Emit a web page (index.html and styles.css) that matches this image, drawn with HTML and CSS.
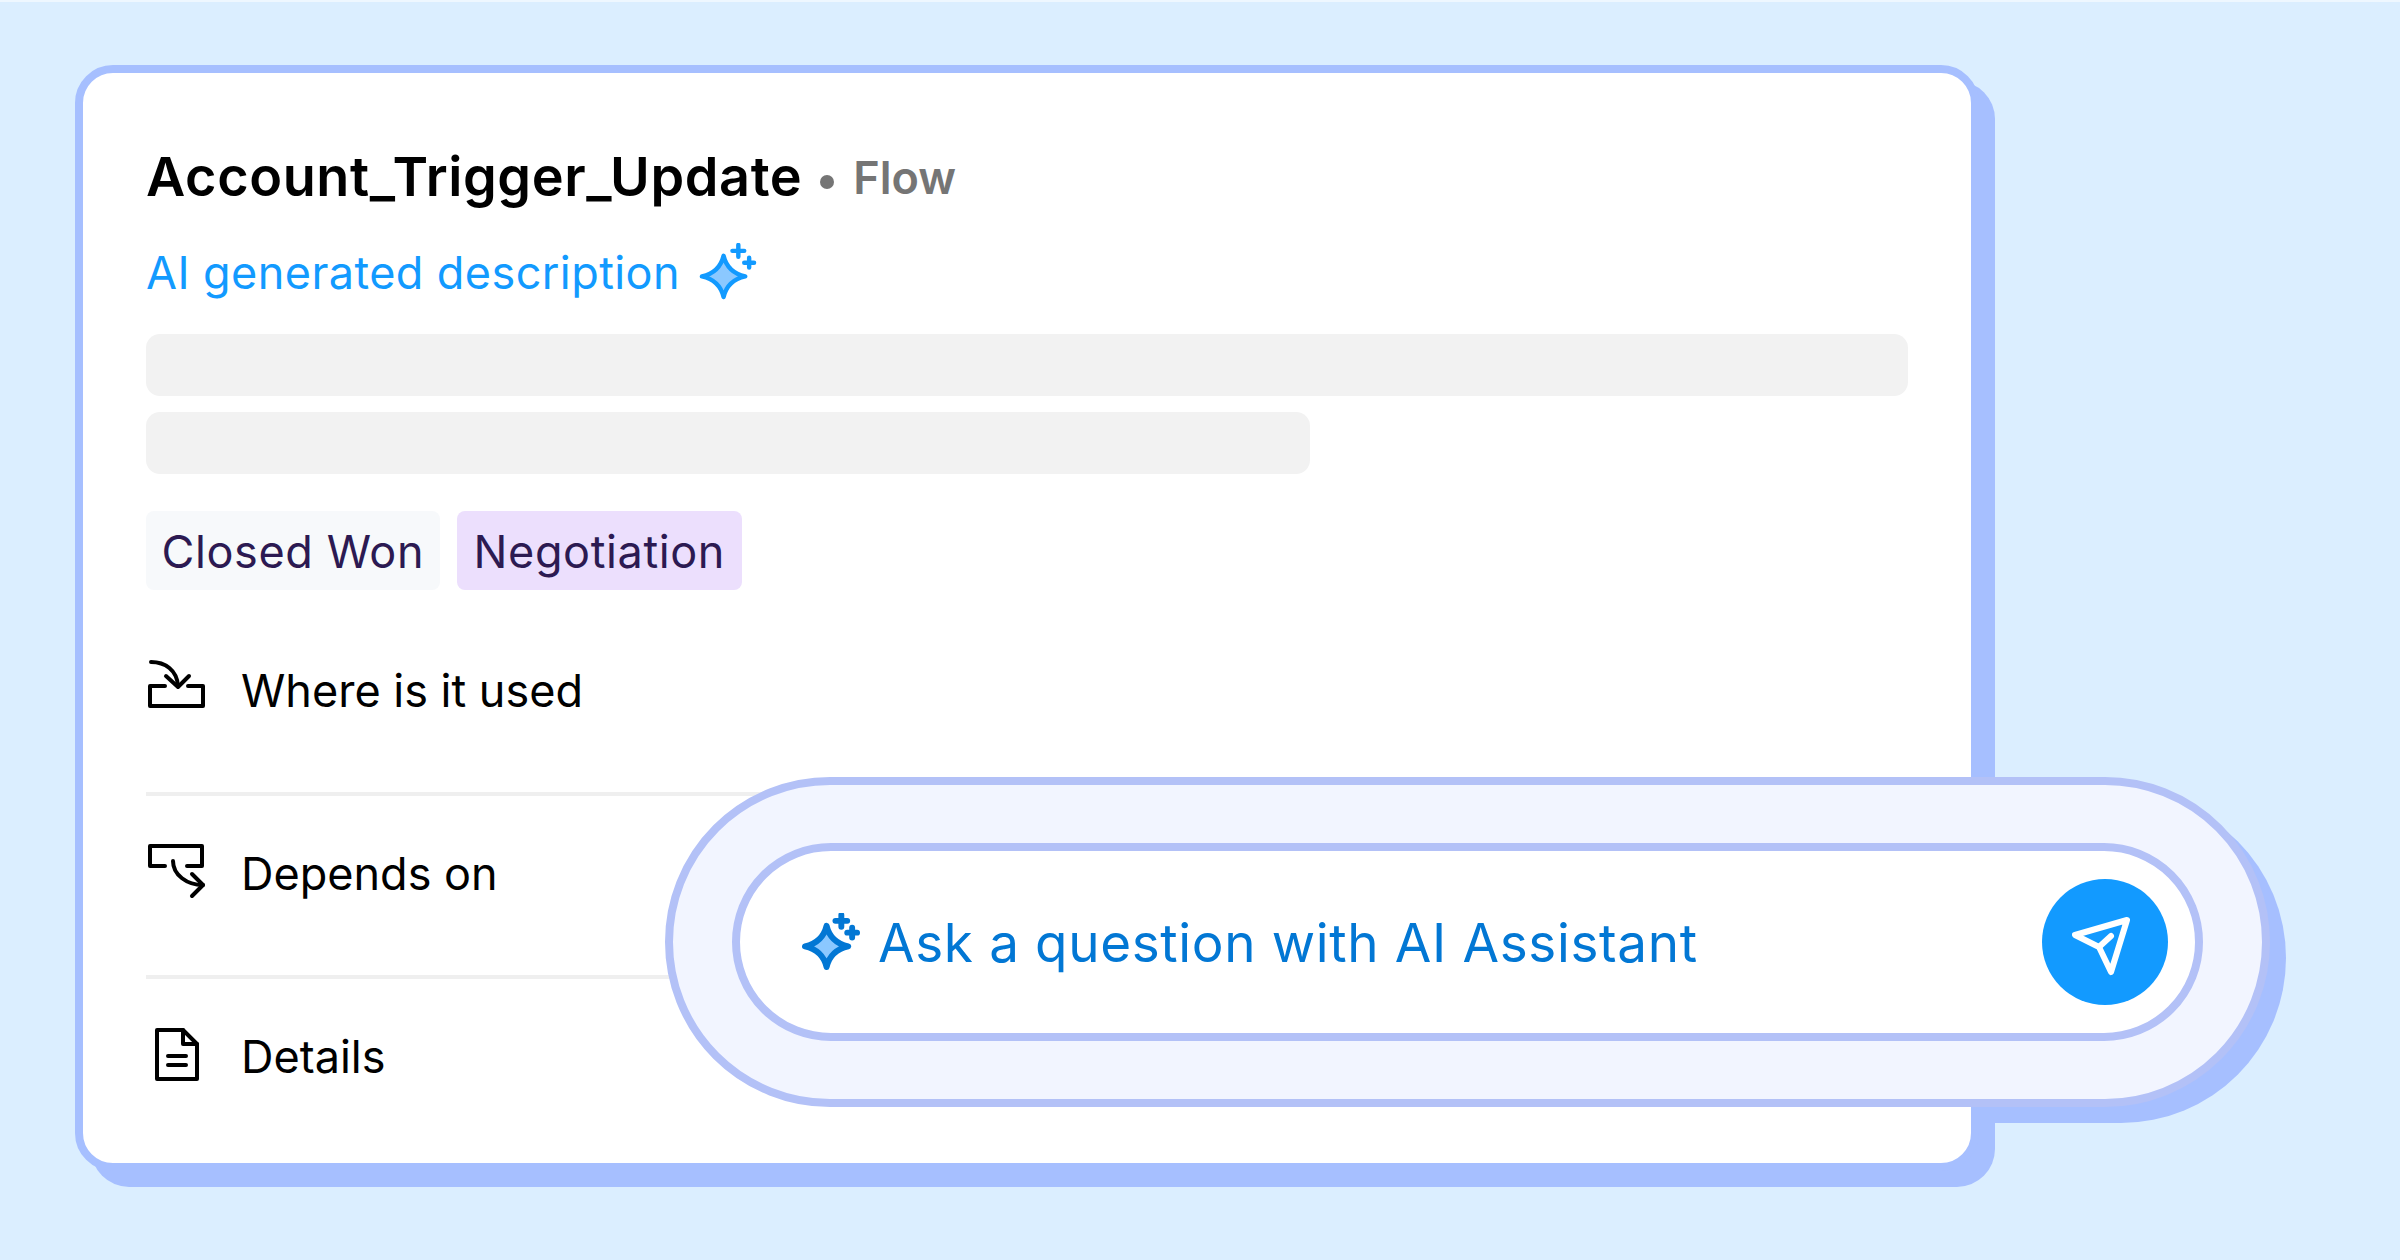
FILE: index.html
```html
<!DOCTYPE html>
<html lang="en">
<head>
	<meta charset="UTF-8">
	<title>Account_Trigger_Update</title>
	<link rel="stylesheet" href="styles.css">
</head>
<body>
	<div class="card">
		<div class="title-row">
			<h1>Account_Trigger_Update</h1>
			<span class="dot"></span>
			<span class="type">Flow</span>
		</div>

		<div class="ai-row">
			<span>AI generated description</span>
			<svg class="sparkle sparkle-light" viewBox="0 0 60 60">
				<path class="star" d="M25 13Q29 30 47 34Q29 38 25 55Q21 38 3 34Q21 30 25 13z"/>
				<path d="M40 2v12M34 8h12M51 15v10M46 20h10"/>
			</svg>
		</div>

		<div class="bar"></div>
		<div class="bar bar-short"></div>

		<div class="tags">
			<span class="tag">Closed Won</span>
			<span class="tag tag-purple">Negotiation</span>
		</div>

		<ul class="rows">
			<li class="row">
				<svg class="row-icon" viewBox="0 0 60 60">
					<path d="M19 26H4v20h53V26H42"/>
					<path d="M5 2c14 0 26 8 27 24"/>
					<path d="M20 16l12 11 11-11"/>
				</svg>
				<span>Where is it used</span>
			</li>
			<li class="row">
				<svg class="row-icon" viewBox="0 0 60 60">
					<path d="M19 23H4V3h52v20H41"/>
					<path d="M27 18c0 14 14 24 30 24"/>
					<path d="M46 31l11 11-11 11"/>
				</svg>
				<span>Depends on</span>
			</li>
			<li class="row">
				<svg class="row-icon" viewBox="0 0 60 60">
					<path d="M11 4h26l14 14v35H11z"/>
					<path d="M37 4v14h14"/>
					<path d="M22 30h18M22 39h18"/>
				</svg>
				<span>Details</span>
			</li>
		</ul>

		<div class="assistant">
			<div class="assistant-input">
				<svg class="sparkle sparkle-dark" viewBox="0 0 60 60">
					<path class="star" d="M25 13Q29 30 47 34Q29 38 25 55Q21 38 3 34Q21 30 25 13z"/>
					<path d="M40 2v12M34 8h12M51 15v10M46 20h10"/>
				</svg>
				<span class="assistant-text">Ask a question with AI Assistant</span>
				<button class="send" type="button">
					<svg viewBox="0 0 126 126">
						<path d="M85 41L33 56 57 68 69 93z"/>
						<path d="M57 68L69 57"/>
					</svg>
				</button>
			</div>
		</div>
	</div>
</body>
</html>
```

FILE: styles.css
```css
* {
	box-sizing: border-box;
	margin: 0;
	padding: 0;
}

body {
	width: 2400px;
	height: 1260px;
	padding: 63px 0 0 75px;
	overflow: hidden;
	background: #dbeeff;
	border-top: 2px solid #eef7ff;
	font-family: "Inter", sans-serif;
	color: #000;
}

.card {
	position: relative;
	width: 1904px;
	padding: 70px 63px 77px;
	background: #fff;
	border: 8px solid #a6bfff;
	border-radius: 38px;
	box-shadow: 16px 16px 0 #a6bfff;
}

.title-row {
	display: flex;
	align-items: center;
}

h1 {
	font-size: 54px;
	line-height: 64px;
	font-weight: 600;
	letter-spacing: 0.6px;
}

.dot {
	width: 14px;
	height: 14px;
	margin: 10px 19px 0 18px;
	border-radius: 50%;
	background: #757575;
}

.type {
	padding-top: 3px;
	font-size: 45px;
	line-height: 64px;
	font-weight: 600;
	color: #757575;
}

.ai-row {
	display: flex;
	align-items: center;
	gap: 19px;
	margin-top: 33px;
	font-size: 45px;
	line-height: 54px;
	letter-spacing: 0.42px;
	color: #129aff;
}

.sparkle {
	flex: none;
	width: 59px;
	height: 59px;
	fill: none;
	stroke-width: 4.5;
	stroke-linecap: round;
	stroke-linejoin: round;
}

.sparkle-light {
	stroke: #129aff;
}

.sparkle-dark {
	stroke: #0277d4;
	stroke-width: 6;
}

.star {
	fill: #8bc8ff;
}

.bar {
	height: 62px;
	margin-top: 16px;
	border-radius: 14px;
	background: #f2f2f2;
}

.ai-row + .bar {
	margin-top: 32px;
}

.bar-short {
	width: 1164px;
}

.tags {
	display: flex;
	gap: 17px;
	margin-top: 37px;
}

.tag {
	height: 79px;
	padding: 0 15.5px;
	border-radius: 8px;
	background: #f7f9fb;
	color: #2c1a52;
	font-size: 45px;
	line-height: 81px;
	letter-spacing: 0.6px;
}

.tag-purple {
	padding: 0 17px;
	background: #ecdffd;
}

.rows {
	list-style: none;
	margin-top: 70px;
}

.row {
	display: flex;
	align-items: center;
	gap: 35px;
	padding-bottom: 72px;
	margin-bottom: 47px;
	border-bottom: 4px solid #efefef;
	font-size: 45px;
}

.row:last-child {
	padding-bottom: 0;
	margin-bottom: 0;
	border-bottom: 0;
}

.row-icon {
	flex: none;
	width: 60px;
	height: 60px;
	fill: none;
	stroke: #000;
	stroke-width: 4;
	stroke-linecap: round;
	stroke-linejoin: round;
}

/* lies over the lower right corner of the card */
.assistant {
	position: absolute;
	left: 582px;
	top: 704px;
	width: 1605px;
	height: 330px;
	padding: 58px 59px;
	background: #f2f5ff;
	border: 8px solid #b3c1f7;
	border-radius: 165px;
}

/* the pill's shadow goes behind the white card, only shows outside it */
.assistant::before {
	content: "";
	position: absolute;
	top: 8px;
	right: -24px;
	bottom: -24px;
	left: 8px;
	z-index: -1;
	border-radius: 165px;
	background: #a6bfff;
}

.assistant-input {
	display: flex;
	align-items: center;
	height: 198px;
	padding: 0 27px 0 62px;
	background: #fff;
	border: 8px solid #b3c1f7;
	border-radius: 99px;
}

.assistant-text {
	margin-left: 17px;
	padding-top: 2px;
	font-size: 53px;
	letter-spacing: 0.65px;
	color: #0277d4;
}

.send {
	flex: none;
	width: 126px;
	height: 126px;
	margin-left: auto;
	border: 0;
	border-radius: 50%;
	background: #129aff;
}

.send svg {
	display: block;
	fill: none;
	stroke: #fff;
	stroke-width: 6;
	stroke-linecap: round;
	stroke-linejoin: round;
}
```
